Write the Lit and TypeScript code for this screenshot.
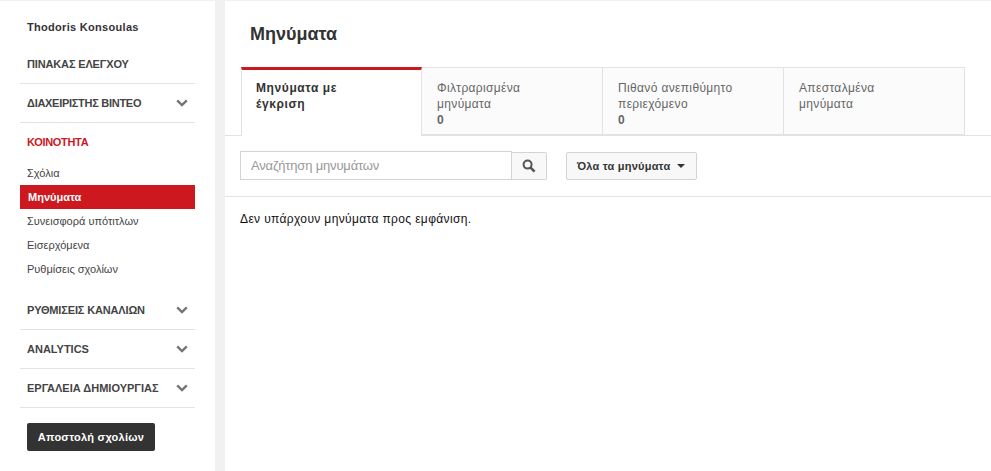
import { LitElement, html, css, svg } from "lit";
import { customElement } from "lit/decorators.js";

const chevron = svg`<svg class="chev" width="12" height="8" viewBox="0 0 12 8"><path d="M1.2 1.4 6 6l4.8-4.6" fill="none" stroke="#757575" stroke-width="2.4"/></svg>`;

@customElement("app-root")
export class AppRoot extends LitElement {
  static styles = css`
    :host { display: block; width: 991px; height: 471px; overflow: hidden; background: #f1f1f1; font-family: "Liberation Sans", Arial, sans-serif; color: #333; }
    .page { display: flex; height: 471px; padding-top: 1px; box-sizing: border-box; gap: 10px; }
    .side { width: 215px; background: #fff; box-sizing: border-box; padding: 0 20px; flex: none; }
    .user { height: 52px; padding: 17px 7px 0; box-sizing: border-box; font-size: 11px; font-weight: bold; line-height: 18px; color: #333; letter-spacing: .3px; }
    .sec { height: 39px; display: flex; align-items: center; justify-content: space-between; padding: 0 7px; font-size: 11px; font-weight: bold; color: #444; border-bottom: 1px solid #e2e2e2; box-sizing: border-box; letter-spacing: -.15px; }
    .sec.first { height: 31px; padding-bottom: 8px; }
    .sec.tight { letter-spacing: -.28px; }
    .sec.loose { letter-spacing: 0; }
    .sec.red { color: #cc181e; height: 38px; border: none; letter-spacing: -.3px; }
    .chev { flex: none; }
    .sub { padding-bottom: 10px; }
    .item { height: 24px; line-height: 24px; padding: 0 7px; font-size: 11px; color: #444; }
    .item.on { background: #cc181e; color: #fff; font-weight: bold; padding-left: 8px; }
    .send { display: inline-block; margin: 15px 0 0 7px; width: 128px; height: 28px; line-height: 28px; text-align: center; background: #333; color: #fff; font-size: 11px; font-weight: bold; border-radius: 2px; letter-spacing: .25px; }
    .main { flex: 1; background: #fff; min-width: 0; }
    h1 { margin: 0; font-size: 18px; font-weight: bold; color: #333; line-height: 20px; padding: 23px 0 0 25px; height: 66px; box-sizing: border-box; }
    .tabs { display: flex; padding-left: 16px; border-bottom: 1px solid #e2e2e2; height: 69px; box-sizing: border-box; }
    .tab { width: 181px; height: 68px; box-sizing: border-box; background: #fbfbfb; border: 1px solid #e2e2e2; border-left: none; padding: 12px 15px 0; font-size: 12px; line-height: 16px; color: #666; letter-spacing: .35px; }
    .tab b { display: block; color: #666; }
    .tab.on { background: #fff; height: 69px; border: none; border-top: 3px solid #cc181e; border-left: 1px solid #e2e2e2; border-right: 1px solid #e2e2e2; padding: 10px 14px 0; font-weight: bold; color: #333; letter-spacing: .6px; }
    .bar { display: flex; align-items: center; height: 61px; padding: 0 0 1px 15px; border-bottom: 1px solid #e2e2e2; box-sizing: border-box; }
    .input { width: 272px; height: 29px; box-sizing: border-box; border: 1px solid #d3d3d3; padding-left: 10px; line-height: 27px; font-size: 13px; color: #999; letter-spacing: -.17px; }
    .sbtn { width: 35px; height: 28px; box-sizing: border-box; margin-top: 1px; border: 1px solid #d3d3d3; border-left: none; background: #f8f8f8; display: flex; align-items: center; justify-content: center; border-radius: 0 2px 2px 0; }
    .drop { margin-left: 19px; width: 131px; height: 28px; box-sizing: border-box; margin-top: 1px; border: 1px solid #d3d3d3; background: #f8f8f8; border-radius: 2px; display: flex; align-items: center; padding-left: 10px; gap: 7px; font-size: 11px; font-weight: bold; color: #333; letter-spacing: .22px; }
    .caret { width: 0; height: 0; border: 4px solid transparent; border-top-color: #333; border-bottom: none; }
    .empty { padding: 15px 0 0 15px; font-size: 12px; line-height: 15px; color: #111; letter-spacing: .36px; }
  `;

  render() {
    const subs = ["Σχόλια", "Μηνύματα", "Συνεισφορά υπότιτλων", "Εισερχόμενα", "Ρυθμίσεις σχολίων"];
    return html`<div class="page">
      <nav class="side">
        <div class="user">Thodoris Konsoulas</div>
        <div class="sec first">ΠΙΝΑΚΑΣ ΕΛΕΓΧΟΥ</div>
        <div class="sec tight"><span>ΔΙΑΧΕΙΡΙΣΤΗΣ ΒΙΝΤΕΟ</span>${chevron}</div>
        <div class="sec red">ΚΟΙΝΟΤΗΤΑ</div>
        <div class="sub">
          ${subs.map((s, i) => html`<div class="item ${i === 1 ? "on" : ""}">${s}</div>`)}
        </div>
        <div class="sec"><span>ΡΥΘΜΙΣΕΙΣ ΚΑΝΑΛΙΩΝ</span>${chevron}</div>
        <div class="sec loose"><span>ANALYTICS</span>${chevron}</div>
        <div class="sec loose"><span>ΕΡΓΑΛΕΙΑ ΔΗΜΙΟΥΡΓΙΑΣ</span>${chevron}</div>
        <div class="send">Αποστολή σχολίων</div>
      </nav>
      <main class="main">
        <h1>Μηνύματα</h1>
        <div class="tabs">
          <div class="tab on">Μηνύματα με<br />έγκριση</div>
          <div class="tab">Φιλτραρισμένα<br />μηνύματα<b>0</b></div>
          <div class="tab">Πιθανό ανεπιθύμητο<br />περιεχόμενο<b>0</b></div>
          <div class="tab">Απεσταλμένα<br />μηνύματα</div>
        </div>
        <div class="bar">
          <div class="input">Αναζήτηση μηνυμάτων</div>
          <div class="sbtn"><svg width="14" height="14" viewBox="0 0 14 14"><circle cx="5.6" cy="5.6" r="4" fill="none" stroke="#555" stroke-width="2"/><path d="M8.6 8.6 12.6 12.6" stroke="#555" stroke-width="2.6"/></svg></div>
          <div class="drop"><span>Όλα τα μηνύματα</span><i class="caret"></i></div>
        </div>
        <div class="empty">Δεν υπάρχουν μηνύματα προς εμφάνιση.</div>
      </main>
    </div>`;
  }
}
